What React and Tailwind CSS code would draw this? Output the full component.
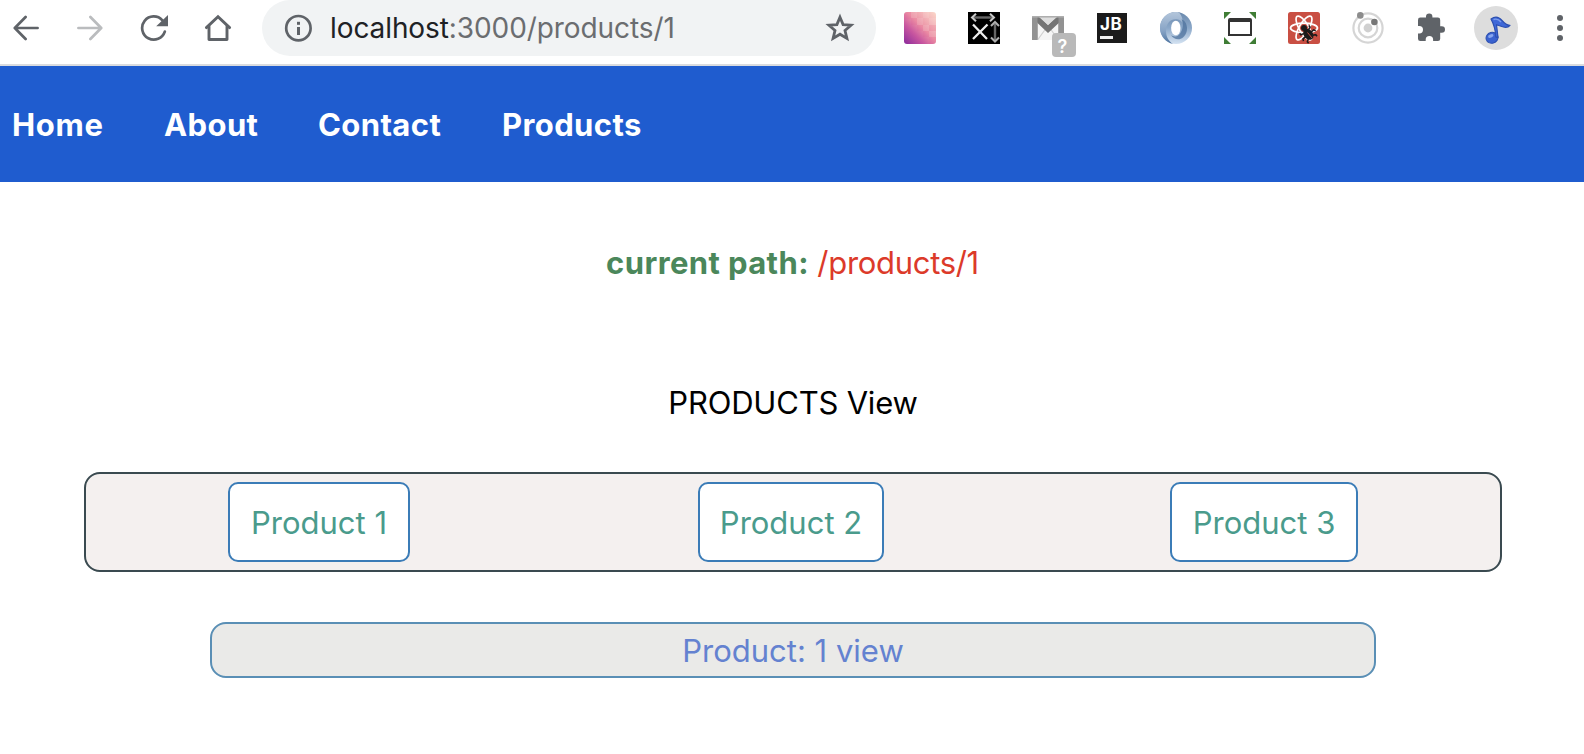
import React from "react";

function BackIcon({ className }) {
  return (
    <svg width="26" height="26" viewBox="0 0 26 26" fill="none" stroke="currentColor" strokeWidth="2.7" strokeLinecap="round" strokeLinejoin="round" className={className}>
      <path d="M24.6 13H2.4M12.6 2 1.8 13l10.8 11" />
    </svg>
  );
}

function ReloadIcon() {
  return (
    <svg width="28" height="28" viewBox="0 0 28 28" fill="none">
      <path d="M24.800 17.6A11.6 11.6 0 1 1 22.4 6.3" stroke="#5f6368" strokeWidth="2.7" strokeLinecap="round" />
      <path d="M28 1v11.2H16.200z" fill="#5f6368" />
    </svg>
  );
}

function HomeIcon() {
  return (
    <svg width="28" height="28" viewBox="0 0 28 28" fill="none" stroke="#5f6368" strokeWidth="2.9" strokeLinecap="round">
      <path d="M2.4 13.6 14 2.800l11.6 10.800" />
      <path d="M5 12.5v13h18v-13" strokeLinejoin="round" />
    </svg>
  );
}

function InfoIcon() {
  return (
    <svg width="28" height="28" viewBox="0 0 28 28" fill="none">
      <circle cx="14.400" cy="14.200" r="12.2" stroke="#5f6368" strokeWidth="2.7" />
      <rect x="13" y="7.8" width="3" height="3" fill="#5f6368" />
      <rect x="13" y="13" width="3" height="8" fill="#5f6368" />
    </svg>
  );
}

function StarIcon() {
  return (
    <svg width="30" height="30" viewBox="0 0 30 30" fill="none" stroke="#5f6368" strokeWidth="2.8">
      <path d="M15 4.200l3.100 7.400 8 .6-6.100 5.300 1.9 7.900-6.900-4.200-6.900 4.200 1.900-7.900-6.100-5.300 8-.6z" />
    </svg>
  );
}

function GradientIcon() {
  return (
    <svg width="32" height="32" viewBox="0 0 32 32">
      <defs>
        <linearGradient id="dusk" x1="0" y1="1" x2="1" y2="0">
          <stop offset="0" stopColor="#8a2a9c" />
          <stop offset=".32" stopColor="#c9579f" />
          <stop offset=".55" stopColor="#ec92a6" />
          <stop offset="1" stopColor="#fbd9cb" />
        </linearGradient>
        <clipPath id="duskClip"><rect width="32" height="32" rx="3" /></clipPath>
      </defs>
      <g clipPath="url(#duskClip)">
        <rect width="32" height="32" fill="url(#dusk)" />
        <g fill="#fff" opacity=".1">
          <path d="M7 0h6v6H7zM19 0h6v6h-6zM13 6h6v7h-6zM25 6h7v7h-7zM19 13h6v6h-6zM25 19h7v6h-7z" />
        </g>
        <g fill="#e0508c" opacity=".1">
          <path d="M0 0h7v7H0zM7 6h6v7H7zM13 13h6v6h-6zM19 19h6v6h-6zM25 25h7v7h-7zM25 13h7v6h-7z" />
        </g>
      </g>
    </svg>
  );
}

function MeasureIcon() {
  return (
    <svg width="32" height="32" viewBox="0 0 32 32" fill="none">
      <rect width="32" height="32" fill="#000" />
      <path d="M5 12.5 19 27M19.5 12.5 5 27" stroke="#eee" strokeWidth="2.3" />
      <path d="M5 5.500h20" stroke="#666" strokeWidth="2.400" />
      <path d="M8 1.700 4 5.500l4 3.800M22 1.700l4 3.800-4 3.800" stroke="#c8c8c8" strokeWidth="2" />
      <path d="M27 12v16" stroke="#666" strokeWidth="2.400" />
      <path d="M23 14l4-4 4 4M23 25.500l4 4 4-4" stroke="#b0b0b0" strokeWidth="2" />
    </svg>
  );
}

function MailIcon() {
  return (
    <svg width="32" height="24" viewBox="0 0 32 24">
      <rect width="32" height="24" rx="1" fill="#8d8d8d" />
      <path d="M5.500 1h21v23h-21z" fill="#f5f5f5" />
      <path d="M5.500 24l8-11M26.500 24l-8-11" stroke="#d0d0d0" strokeWidth="1.2" />
      <path d="M2 1h6l8 8 8-8h6v3L16 17 5.500 7z" fill="#757575" />
      <path d="M0 1h5.500v23H0zM26.500 1H32v23h-5.500z" fill="#929292" />
      <path d="M7 1h18l-9 8z" fill="#dedede" />
      <path d="M0 .8h32" stroke="#b0b0b0" strokeWidth="1.500" />
    </svg>
  );
}

function SwirlIcon() {
  return (
    <svg width="32" height="32" viewBox="0 0 32 32">
      <defs>
        <linearGradient id="swirlA" x1=".5" y1="0" x2=".5" y2="1">
          <stop offset="0" stopColor="#6988ac" />
          <stop offset=".5" stopColor="#8ba8c9" />
          <stop offset="1" stopColor="#d5e3f2" />
        </linearGradient>
        <linearGradient id="swirlB" x1=".5" y1="0" x2=".5" y2="1">
          <stop offset="0" stopColor="#b4c6db" />
          <stop offset=".6" stopColor="#86a3c5" />
          <stop offset="1" stopColor="#4d739f" />
        </linearGradient>
      </defs>
      <circle cx="16" cy="16" r="16" fill="url(#swirlA)" />
      <path fill="url(#swirlB)" d="M18 .1C8-1.200 0 6 0 16c0 8 6 15 13 15.800C8 29 6 24 6 19 6 11 11 6 18 7.500c2 .5 3.500 1.800 4.500 3.500C23 6 21 2 18 .1z" />
      <path fill="#4d719c" opacity=".75" d="M20 21.500c-2 3-5.500 4-9 1.500 2 4 8 6 12 2.500s5-9 3-14c-1.200-2.500-2.500-3.500-4.500-4 2.500 4 1.500 10-1.500 14z" />
      <ellipse cx="15.800" cy="16" rx="4.700" ry="7.300" fill="#fff" />
    </svg>
  );
}

function ResizeIcon() {
  return (
    <svg width="32" height="32" viewBox="0 0 32 32">
      <path d="M0 0h7L0 7zM25 0h7v7zM0 25l7 7H0zM32 25v7h-7z" fill="#3f7d35" />
      <path d="M6 6h20q2 0 2 2v16H4V8q0-2 2-2zm0 4v12h20V10z" fill="#333" fillRule="evenodd" />
    </svg>
  );
}

function ReactBugIcon() {
  return (
    <svg width="32" height="32" viewBox="0 0 32 32" fill="none">
      <rect width="32" height="32" rx="2.500" fill="#c94f43" />
      <g stroke="#fff" strokeWidth="1.700">
        <ellipse cx="16" cy="16" rx="13.500" ry="4.800" />
        <ellipse cx="16" cy="16" rx="13.500" ry="4.800" transform="rotate(60 16 16)" />
        <ellipse cx="16" cy="16" rx="13.500" ry="4.800" transform="rotate(120 16 16)" />
      </g>
      <circle cx="16" cy="16" r="3" fill="#1c1a1a" />
      <g transform="rotate(-40 20 22)" fill="#1c1a1a" stroke="#1c1a1a" strokeWidth="1.500">
        <ellipse cx="20" cy="22.500" rx="3.800" ry="5.200" />
        <path d="M17 19l-3-1v-2M16.500 22.500H13l-1 2M17 26l-2.500 1.500v2M23 19l3-1v-2M23.500 22.500H27l1 2M23 26l2.500 1.500v2" fill="none" />
      </g>
      <path d="M19.500 20.500l4.500 5.500" stroke="#c94f43" strokeWidth="1" />
    </svg>
  );
}

function OrbitIcon() {
  return (
    <svg width="32" height="32" viewBox="0 0 32 32" fill="none">
      <circle cx="16" cy="16" r="14.600" stroke="#d5d5d5" strokeWidth="2.200" />
      <circle cx="16" cy="16" r="9.300" stroke="#d5d5d5" strokeWidth="2.200" />
      <circle cx="16" cy="16" r="4.400" fill="#d0d0d0" />
      <circle cx="8.300" cy="3.400" r="3.300" fill="#8c8c8c" />
      <circle cx="22.400" cy="10" r="3.300" fill="#777" />
    </svg>
  );
}

function PuzzleIcon() {
  return (
    <svg width="29" height="29" viewBox="0 0 29 29" fill="#5f6368">
      <path d="M9 4.600V3.600a3.200 3.200 0 0 1 6.400 0v1h5.500a2.300 2.300 0 0 1 2.300 2.300v6.300h1.500a3.300 3.300 0 0 1 0 6.600h-1.500v6a2.300 2.300 0 0 1-2.300 2.300h-4.800v-1.500a3.700 3.700 0 0 0-7.400 0v1.500H3.300A2.300 2.300 0 0 1 1 25.800v-5.300h1.300a3.700 3.700 0 0 0 0-7.400H1V6.900a2.300 2.300 0 0 1 2.300-2.300z" />
    </svg>
  );
}

function NoteIcon() {
  return (
    <svg width="26" height="28" viewBox="0 0 26 28">
      <ellipse cx="7" cy="21.800" rx="6" ry="5.400" fill="#3a62cf" stroke="#2c4fb0" strokeWidth="1" transform="rotate(-15 7 21.800)" />
      <path d="M6 3C10 .2 14 1 17 4.500s5 5 8 4.800c-2 2.500-5.500 2.400-9 1l-4.500-1.600c.5 4 1 8 1.500 13l-2.200-.8C10.500 14 9 8.500 6 3z" fill="#3f68d8" stroke="#2c4fb0" strokeWidth="1.200" strokeLinejoin="round" />
      <ellipse cx="5.800" cy="20" rx="2.800" ry="1.600" fill="#88a6ee" transform="rotate(-20 5.800 20)" />
      <path d="M8.500 3.500c3-1 5.500 0 7.500 2.500" stroke="#7c9cec" strokeWidth="1.400" fill="none" />
    </svg>
  );
}

function DotsIcon() {
  return (
    <svg width="6" height="28" viewBox="0 0 6 28" fill="#5f6368">
      <circle cx="3" cy="4" r="3" />
      <circle cx="3" cy="14" r="3" />
      <circle cx="3" cy="24" r="3" />
    </svg>
  );
}

function Toolbar() {
  return (
    <header className="flex h-[66px] items-start border-b-2 border-[#dadcdf] bg-white">
      <div className="flex h-[55px] w-[262px] shrink-0 items-center pl-[13px] text-[#5f6368]">
        <BackIcon />
        <BackIcon className="ml-[38px] rotate-180 text-[#babcbe]" />
        <div className="ml-[37px]"><ReloadIcon /></div>
        <div className="ml-9"><HomeIcon /></div>
      </div>
      <div className="flex h-14 w-[614px] shrink-0 items-center rounded-full bg-[#f1f3f4] pr-[21px] pl-[22px]">
        <InfoIcon />
        <p className="ml-[18px] flex-1 text-[28px] leading-14 tracking-[-0.09px] whitespace-nowrap text-[#202124]">
          localhost<span className="text-[#6b6d70]">:3000/products/1</span>
        </p>
        <StarIcon />
      </div>
      <div className="flex h-14 flex-1 items-center pl-7">
        <GradientIcon />
        <div className="ml-8"><MeasureIcon /></div>
        <div className="relative ml-8">
          <MailIcon />
          <span className="absolute top-[17px] left-5 flex size-6 items-center justify-center rounded bg-[#b9b9b9] pr-[3px] pt-[3px] text-[18px] leading-6 font-semibold text-white">?</span>
        </div>
        <div className="ml-[33px] flex h-[30px] w-[30px] flex-col items-start bg-[#1b1b1b] pl-[3px]">
          <span className="pt-[3px] text-[17px] leading-[17px] font-bold tracking-[0.5px] text-white">JB</span>
          <span className="mt-[3px] h-[3px] w-[13px] bg-[#eeeeee]" />
        </div>
        <div className="ml-[33px]"><SwirlIcon /></div>
        <div className="ml-8"><ResizeIcon /></div>
        <div className="ml-8"><ReactBugIcon /></div>
        <div className="ml-8"><OrbitIcon /></div>
        <div className="ml-[33px] pb-px"><PuzzleIcon /></div>
        <div className="ml-7 flex size-11 items-center justify-center rounded-full bg-[#dddddd] pt-[3px] pl-1"><NoteIcon /></div>
        <div className="ml-[39px]"><DotsIcon /></div>
      </div>
    </header>
  );
}

export default function App() {
  return (
    <div className="h-[754px] w-[1584px] overflow-hidden bg-white font-['Inter',sans-serif] text-[31px] leading-[38px]">
      <Toolbar />
      <nav className="flex h-[116px] items-center bg-[#1f5ccf] pt-0.5 pl-3 font-bold tracking-[0.4px] text-white">
        <a className="w-[152px] tracking-[0.7px]">Home</a>
        <a className="w-[154px]">About</a>
        <a className="w-[184px]">Contact</a>
        <a>Products</a>
      </nav>
      <main className="flex flex-col pt-[62px]">
        <p className="pl-px text-center tracking-[-0.3px] text-[#dc3a2a]">
          <span className="font-bold tracking-[0.4px] text-[#4b875b]">current path:</span> /products/1
        </p>
        <h1 className="mt-[102px] pl-[2px] text-center tracking-[-0.2px] text-black">PRODUCTS View</h1>
        <div className="mt-[50px] ml-[84px] flex h-[100px] w-[1418px] items-center rounded-2xl border-2 border-[#3a4a50] bg-[#f4f0ef] pl-[142px] text-[#4a9b8c]">
          <a className="flex h-20 w-[182px] items-center justify-center rounded-[10px] border-2 border-[#3b7cb7] bg-white pt-0.5">Product 1</a>
          <a className="ml-[288px] flex h-20 w-[186px] items-center justify-center rounded-[10px] border-2 border-[#3b7cb7] bg-white pt-0.5">Product 2</a>
          <a className="ml-[286px] flex h-20 w-[188px] items-center justify-center rounded-[10px] border-2 border-[#3b7cb7] bg-white pt-0.5">Product 3</a>
        </div>
        <div className="mt-[50px] ml-[210px] flex h-14 w-[1166px] items-center justify-center rounded-2xl border-2 border-[#5a8fb5] bg-[#eaeae8] pt-0.5 text-[#6482d0]">
          Product: 1 view
        </div>
      </main>
    </div>
  );
}
